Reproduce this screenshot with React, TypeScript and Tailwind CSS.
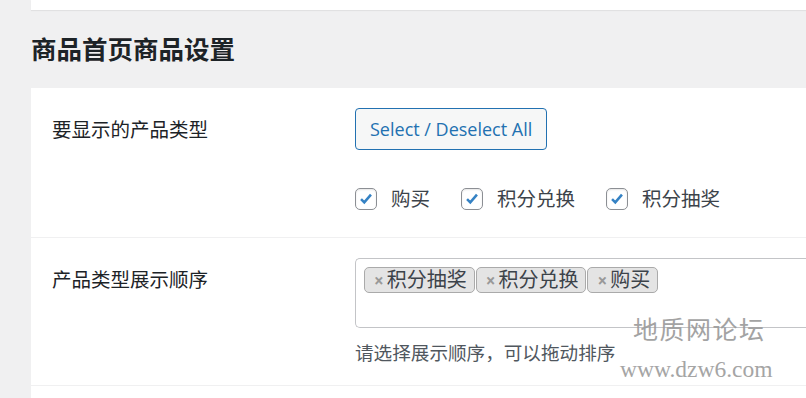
import React from 'react';

const cjk = { fontFamily: '"Noto Sans", "Noto Sans CJK SC", sans-serif' };

const Check: React.FC<{ label: string }> = ({ label }) => (
  <label className="flex items-center gap-[14px] mr-[31px]">
    <span className="w-[22px] h-[22px] rounded-[5px] border border-[#8c8f94] bg-white flex items-center justify-center shadow-[inset_0_1px_2px_rgba(0,0,0,0.1)]">
      <svg viewBox="0 0 20 20" className="w-[18px] h-[18px]">
        <path d="M4.5 10.2l3.6 3.6 7.4-8.6" fill="none" stroke="#3582c4" strokeWidth="2.8" strokeLinejoin="miter" />
      </svg>
    </span>
    <span className="text-[19.5px] text-[#3c434a] leading-none">{label}</span>
  </label>
);

const Tag: React.FC<{ label: string }> = ({ label }) => (
  <span className="h-[26px] flex items-center border border-[#aaa] bg-[#e4e4e4] rounded-[5px] pl-[9px] pr-[7px] mr-[1px]">
    <span className="text-[#999] text-[17px] font-bold mr-[3px] leading-none">×</span>
    <span className="text-[20px] text-[#3c434a] leading-none">{label}</span>
  </span>
);

export default function App() {
  return (
    <div className="relative w-[806px] h-[398px] overflow-hidden bg-[#f0f0f1]" style={cjk}>
      <div className="ml-[31px] h-[10px] bg-white shadow-[0_1px_1px_rgba(0,0,0,0.06)]" />
      <h2 className="ml-[31px] h-[78px] flex items-center text-[25.5px] font-bold text-[#1d2327]">商品首页商品设置</h2>
      <div className="ml-[31px] bg-white">
        <div className="flex h-[150px] border-b border-[#f0f0f1]">
          <div className="w-[324px] shrink-0 pl-[21px] pt-[29px] text-[19.5px] leading-[26px] text-[#1d2327]">要显示的产品类型</div>
          <div className="pt-[20px]">
            <button className="h-[42px] px-[14px] border border-[#2271b1] rounded-[4px] bg-[#f6f7f7] text-[#2271b1] text-[18px]" style={{ fontFamily: '"Open Sans", "Noto Sans", sans-serif' }}>
              Select / Deselect All
            </button>
            <div className="flex mt-[38px]">
              <Check label="购买" />
              <Check label="积分兑换" />
              <Check label="积分抽奖" />
            </div>
          </div>
        </div>
        <div className="flex h-[148px] border-b border-[#f0f0f1]">
          <div className="w-[324px] shrink-0 pl-[21px] pt-[29px] text-[19.5px] leading-[26px] text-[#1d2327]">产品类型展示顺序</div>
          <div className="pt-[20px] flex-1 min-w-0">
            <div className="h-[70px] w-[470px] border border-[#c3c4c7] rounded-l-[5px] border-r-0 pt-[8px] pl-[8px] flex items-start">
              <Tag label="积分抽奖" />
              <Tag label="积分兑换" />
              <Tag label="购买" />
            </div>
            <p className="mt-[13px] text-[18.6px] leading-[24px] text-[#50575e] whitespace-nowrap">请选择展示顺序，可以拖动排序</p>
          </div>
        </div>
        <div className="h-[20px]" />
      </div>
      <div className="absolute left-[633px] top-[316px] text-[25px] tracking-[1.5px] text-[#9a9a9a] opacity-90 leading-none" style={{ fontFamily: '"Noto Sans CJK SC", serif' }}>
        地质网论坛
      </div>
      <div className="absolute left-[620px] top-[358px] text-[23.5px] text-[#a5a5a5] leading-none" style={{ fontFamily: '"Liberation Serif", serif' }}>
        www.dzw6.com
      </div>
    </div>
  );
}
